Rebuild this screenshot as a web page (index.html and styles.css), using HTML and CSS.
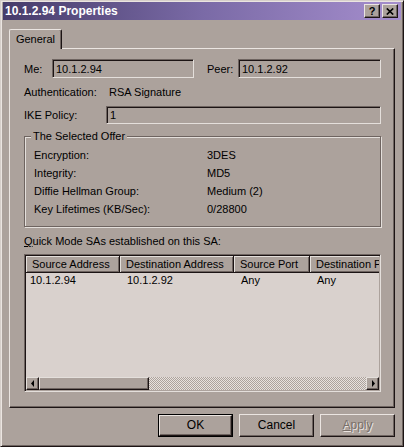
FILE: index.html
```html
<!DOCTYPE html>
<html>
<head>
<meta charset="utf-8">
<title>10.1.2.94 Properties</title>
<link rel="stylesheet" href="styles.css">
</head>
<body>
<div class="window">
  <div class="titlebar">
    <span class="title">10.1.2.94 Properties</span>
    <div class="caption-btns">
      <div class="cap-btn help">?</div>
      <div class="cap-btn close"><svg width="8" height="7" viewBox="0 0 8 7"><path d="M0.8 0.5 L7.2 6.5 M7.2 0.5 L0.8 6.5" stroke="#000" stroke-width="1.7" fill="none"/></svg></div>
    </div>
  </div>
  <div class="tabs"><div class="tab">General</div></div>
  <div class="panel">
    <div class="row pair">
      <span class="lbl me">Me:</span>
      <div class="edit half">10.1.2.94</div>
      <span class="lbl peer">Peer:</span>
      <div class="edit grow">10.1.2.92</div>
    </div>
    <div class="row auth">
      <span class="lbl authl">Authentication:</span>
      <span>RSA Signature</span>
    </div>
    <div class="row ike">
      <span class="lbl ikel">IKE Policy:</span>
      <div class="edit grow">1</div>
    </div>
    <fieldset class="group">
      <legend>The Selected Offer</legend>
      <div class="kv"><span>Encryption:</span><span>3DES</span></div>
      <div class="kv"><span>Integrity:</span><span>MD5</span></div>
      <div class="kv"><span>Diffie Hellman Group:</span><span>Medium (2)</span></div>
      <div class="kv"><span>Key Lifetimes (KB/Sec):</span><span>0/28800</span></div>
    </fieldset>
    <div class="qm"><u>Q</u>uick Mode SAs established on this SA:</div>
    <div class="listview">
      <div class="lv-header">
        <div class="hcol c1">Source Address</div>
        <div class="hcol c2">Destination Address</div>
        <div class="hcol c3">Source Port</div>
        <div class="hcol c4">Destination Port</div>
      </div>
      <div class="lv-row">
        <div class="cell c1 first">10.1.2.94</div>
        <div class="cell c2">10.1.2.92</div>
        <div class="cell c3">Any</div>
        <div class="cell c4">Any</div>
      </div>
      <div class="lv-fill"></div>
      <div class="hscroll">
        <div class="sb-btn"><svg width="4" height="7" viewBox="0 0 4 7"><polygon points="3,0 3,7 0,3.5" fill="#000"/></svg></div>
        <div class="sb-thumb"></div>
        <div class="sb-track"></div>
        <div class="sb-btn"><svg width="4" height="7" viewBox="0 0 4 7"><polygon points="1,0 1,7 4,3.5" fill="#000"/></svg></div>
      </div>
    </div>
  </div>
  <div class="buttons">
    <div class="btn default"><span class="btn-face">OK</span></div>
    <div class="btn"><span class="btn-face">Cancel</span></div>
    <div class="btn disabled"><span class="btn-face"><u>A</u>pply</span></div>
  </div>
</div>
</body>
</html>
```

FILE: styles.css
```css
* { box-sizing: border-box; }

html, body {
  margin: 0;
  padding: 0;
  background: #aca29c;
}

body {
  font-family: "Liberation Sans", Arial, sans-serif;
  font-size: 11px;
  color: #000;
}

.window {
  width: 404px;
  height: 447px;
  background: #aca29c;
  border: 1px solid;
  border-color: #d6cfca #1c1414 #1c1414 #d6cfca;
  box-shadow: inset 1px 1px 0 #ebe5e1, inset -1px -1px 0 #6e6460;
  padding: 1px 2px 2px 2px;
}

.titlebar {
  height: 18px;
  display: flex;
  align-items: center;
  justify-content: space-between;
  padding: 0 3px 0 2px;
  background: linear-gradient(to right, #463c6a 0%, #7a6aa6 50%, #a58ecd 100%);
}

.title {
  color: #fff;
  font-weight: bold;
  font-size: 12px;
  line-height: 18px;
}

.caption-btns {
  display: flex;
  gap: 2px;
}

.cap-btn {
  width: 16px;
  height: 14px;
  background: #aca29c;
  border: 1px solid;
  border-color: #ebe5e1 #1c1414 #1c1414 #ebe5e1;
  box-shadow: inset -1px -1px 0 #6e6460;
  display: flex;
  align-items: center;
  justify-content: center;
  font-weight: bold;
  font-size: 11px;
  line-height: 12px;
}

.tabs {
  margin-top: 9px;
  padding-left: 6px;
  display: flex;
}

.tab {
  position: relative;
  z-index: 1;
  width: 53px;
  height: 20px;
  margin-bottom: -1px;
  background: #aca29c;
  border-top: 1px solid #ebe5e1;
  border-left: 1px solid #ebe5e1;
  border-right: 1px solid #1c1414;
  box-shadow: inset -1px 0 0 #6e6460;
  border-radius: 2px 2px 0 0;
  text-align: center;
  line-height: 18px;
}

.panel {
  margin: 0 6px;
  width: 386px;
  border: 1px solid;
  border-color: #ebe5e1 #1c1414 #1c1414 #ebe5e1;
  box-shadow: inset -1px -1px 0 #6e6460;
  padding: 10px 13px 15px 14px;
}

.row {
  display: flex;
  align-items: center;
}

.pair { height: 19px; }
.auth { height: 28px; }
.ike { height: 18px; }

.lbl { flex: none; }
.me { width: 28px; }
.peer { width: 31px; margin-left: 13px; }
.authl { width: 85px; }
.ikel { width: 82px; }

.edit {
  height: 100%;
  background: #aca29c;
  border: 1px solid;
  border-color: #6e6460 #e4dfdb #e4dfdb #6e6460;
  box-shadow: inset 1px 1px 0 #1c1414;
  padding-left: 3px;
  display: flex;
  align-items: center;
}

.half { width: 142px; flex: none; }
.grow { flex: 1; }

.group {
  margin: 6px 0 0 0;
  border: 1px solid #6e6460;
  box-shadow: inset 1px 1px 0 #e4dfdb, 1px 1px 0 #e4dfdb;
  padding: 3px 0 8px 9px;
}

.group legend {
  padding: 0 2px;
  margin-left: -3px;
  line-height: 13px;
  background: #aca29c;
}

.kv {
  display: grid;
  grid-template-columns: 173px 1fr;
  height: 18px;
  line-height: 18px;
}

.qm {
  margin: 8px 0 6px 0;
  line-height: 13px;
}

.listview {
  height: 138px;
  background: #d9d1cd;
  border: 1px solid;
  border-color: #6e6460 #e4dfdb #e4dfdb #6e6460;
  box-shadow: inset 1px 1px 0 #1c1414, inset -1px -1px 0 #aca29c;
  padding: 1px;
  display: flex;
  flex-direction: column;
  overflow: hidden;
}

.lv-header, .lv-row {
  display: flex;
  overflow: hidden;
  white-space: nowrap;
  flex: none;
}

.hcol {
  flex: none;
  height: 17px;
  line-height: 16px;
  padding-left: 6px;
  background: #aca29c;
  border-right: 1px solid #1c1414;
  border-bottom: 1px solid #1c1414;
  box-shadow: inset 1px 1px 0 #e4dfdb, inset -1px -1px 0 #6e6460;
  overflow: hidden;
}

.c1 { width: 94px; }
.c2 { width: 114px; }
.c3 { width: 76px; }
.c4 { width: 110px; }

.lv-row { height: 14px; line-height: 14px; }

.cell {
  flex: none;
  padding-left: 7px;
}

.cell.first { padding-left: 4px; }

.lv-fill { flex: 1; }

.hscroll {
  flex: none;
  height: 13px;
  display: flex;
}

.sb-btn, .sb-thumb {
  flex: none;
  background: #aca29c;
  border: 1px solid;
  border-color: #e4dfdb #1c1414 #1c1414 #e4dfdb;
  box-shadow: inset -1px -1px 0 #6e6460;
}

.sb-btn {
  width: 13px;
  display: flex;
  align-items: center;
  justify-content: center;
}

.sb-thumb { width: 110px; }

.sb-track {
  flex: 1;
  background-color: #aca29c;
  background-image: conic-gradient(#e8e2de 25%, #aca29c 0 50%, #e8e2de 0 75%, #aca29c 0);
  background-size: 2px 2px;
}

.buttons {
  margin-top: 6px;
  display: flex;
  justify-content: flex-end;
  gap: 6px;
  padding-right: 6px;
}

.btn {
  width: 75px;
  height: 23px;
  background: #aca29c;
  border: 1px solid;
  border-color: #ebe5e1 #1c1414 #1c1414 #ebe5e1;
  box-shadow: inset -1px -1px 0 #6e6460;
  display: flex;
}

.btn-face {
  flex: 1;
  display: flex;
  align-items: center;
  justify-content: center;
  line-height: 13px;
  font-size: 12px;
}

.btn.default {
  border: 1px solid #000;
  box-shadow: none;
}

.btn.default .btn-face {
  border: 1px solid;
  border-color: #ebe5e1 #1c1414 #1c1414 #ebe5e1;
  box-shadow: inset -1px -1px 0 #6e6460;
}

.btn.disabled .btn-face {
  color: #7a706a;
  text-shadow: 1px 1px 0 #ebe5e1;
}
```
